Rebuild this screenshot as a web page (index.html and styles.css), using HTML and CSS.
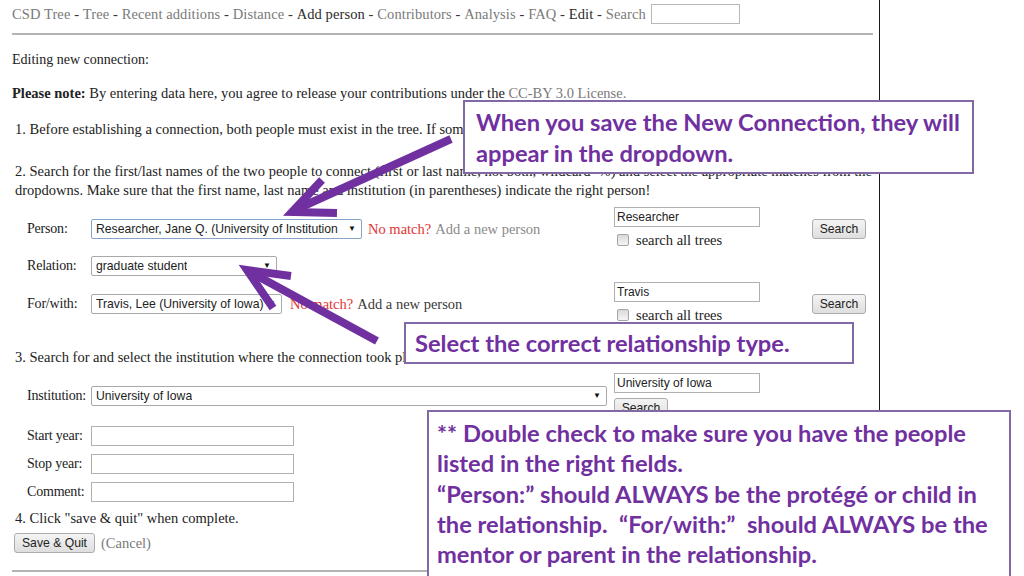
FILE: index.html
```html
<!DOCTYPE html>
<html>
<head>
<meta charset="utf-8">
<title>CSD Tree - Editing new connection</title>
<link rel="stylesheet" href="styles.css">
</head>
<body>
<div class="slide">
  <div class="page">
    <nav class="nav">
      <a class="lnk">CSD Tree</a><span class="sep"> - </span><a class="lnk">Tree</a><span class="sep"> - </span><a class="lnk">Recent additions</a><span class="sep"> - </span><a class="lnk">Distance</a><span class="sep"> - </span><a class="lnk cur">Add person</a><span class="sep"> - </span><a class="lnk">Contributors</a><span class="sep"> - </span><a class="lnk">Analysis</a><span class="sep"> - </span><a class="lnk">FAQ</a><span class="sep"> - </span><a class="lnk cur">Edit</a><span class="sep"> - </span><span class="lnk">Search</span>
      <input class="nav-search" type="text">
    </nav>
    <hr class="rule">
    <p class="t editing">Editing new connection:</p>
    <p class="t note"><b>Please note:</b> By entering data here, you agree to release your contributions under the <a class="lnk">CC-BY 3.0 License.</a></p>
    <p class="t step s1">1. Before establishing a connection, both people must exist in the tree. If someone is missing, add them first.</p>
    <p class="t step s2">2. Search for the first/last names of the two people to connect (first or last name, not both, wildcard=%) and select the appropriate matches from the<br>dropdowns. Make sure that the first name, last name and institution (in parentheses) indicate the right person!</p>

    <div class="grid people">
      <div class="lbl">Person:</div>
      <div class="ctl">
        <div class="sel focus w-person"><span class="val">Researcher, Jane Q. (University of Institution</span><span class="arr">▼</span></div>
        <span class="nomatch">No match?</span> <a class="addp light">Add a new person</a>
      </div>
      <div class="srch">
        <input class="inp" type="text" value="Researcher">
        <label class="chk"><span class="box"></span>search all trees</label>
      </div>
      <div class="btncell"><button class="btn w-search">Search</button></div>

      <div class="lbl">Relation:</div>
      <div class="ctl">
        <div class="sel w-rel"><span class="val">graduate student</span><span class="arr">▼</span></div>
      </div>
      <div></div>
      <div></div>

      <div class="lbl">For/with:</div>
      <div class="ctl">
        <div class="sel w-for"><span class="val">Travis, Lee (University of Iowa)</span><span class="arr">▼</span></div>
        <span class="nomatch nm2">No match?</span> <a class="addp dark">Add a new person</a>
      </div>
      <div class="srch">
        <input class="inp" type="text" value="Travis">
        <label class="chk"><span class="box"></span>search all trees</label>
      </div>
      <div class="btncell"><button class="btn w-search">Search</button></div>
    </div>

    <p class="t step s3">3. Search for and select the institution where the connection took place.</p>

    <div class="grid inst">
      <div class="lbl">Institution:</div>
      <div class="ctl">
        <div class="sel w-inst"><span class="val">University of Iowa</span><span class="arr">▼</span></div>
      </div>
      <div class="srch">
        <input class="inp" type="text" value="University of Iowa">
        <button class="btn w-search under">Search</button>
      </div>
      <div></div>
    </div>

    <div class="grid years">
      <div class="lbl">Start year:</div>
      <div class="ctl"><input class="inp yr" type="text"></div>
      <div class="lbl">Stop year:</div>
      <div class="ctl"><input class="inp yr" type="text"></div>
      <div class="lbl">Comment:</div>
      <div class="ctl"><input class="inp yr" type="text"></div>
    </div>

    <p class="t step s4">4. Click "save &amp; quit" when complete.</p>
    <div class="actions"><button class="btn save">Save &amp; Quit</button><span class="cancel">(<a class="lnk">Cancel</a>)</span></div>
    <hr class="rule bottom">
  </div>

  <svg class="arrows" width="1024" height="576" viewBox="0 0 1024 576">
    <g fill="none" stroke="#7030a0" stroke-width="8" stroke-linejoin="miter" stroke-linecap="butt">
      <line x1="451" y1="139" x2="297" y2="209"/>
      <polyline points="322,180 292,212 337,213"/>
      <line x1="377" y1="341" x2="252" y2="273"/>
      <polyline points="291,276 247,270 273,308"/>
    </g>
  </svg>

  <div class="callout c1">When you save the New Connection, they will<br>appear in the dropdown.</div>
  <div class="callout c2">Select the correct relationship type.</div>
  <div class="callout c3">** Double check to make sure you have the people<br>listed in the right fields.<br>“Person:” should ALWAYS be the protégé or child in<br>the relationship.&nbsp; “For/with:”&nbsp; should ALWAYS be the<br>mentor or parent in the relationship.</div>
</div>
</body>
</html>
```

FILE: styles.css
```css
html, body {
  margin: 0;
  padding: 0;
  background: #ffffff;
}

body {
  width: 1024px;
  height: 576px;
  overflow: hidden;
  font-family: "Liberation Serif", "Times New Roman", serif;
  font-size: 14.5px;
  color: #222222;
}

.slide {
  position: relative;
  width: 1024px;
  height: 576px;
  overflow: hidden;
  background: #ffffff;
}

.page {
  width: 867px;
  height: 576px;
  padding-left: 12px;
  border-right: 1px solid #1a1a1a;
  overflow: hidden;
}

/* navigation */
.nav {
  display: flex;
  align-items: center;
  height: 20px;
  padding-top: 4px;
  white-space: pre;
  line-height: 20px;
  letter-spacing: 0.1px;
}

.lnk {
  color: #7a7a7a;
  text-decoration: none;
}

.lnk.cur {
  color: #2a2a2a;
}

.sep {
  color: #333333;
}

.nav-search {
  margin: 0 0 0 5px;
  width: 89px;
  height: 20px;
  box-sizing: border-box;
  border: 1px solid #b8b8b8;
  padding: 0;
}

.rule {
  margin: 9px 6px 0 0;
  border: 0;
  height: 2px;
  background: #b3b3b3;
}

/* text blocks */
.t {
  margin: 0;
  line-height: 19px;
}

.step {
  padding-left: 3px;
}

.editing { margin-top: 15px; font-size: 14px; }
.note { margin-top: 15px; white-space: nowrap; }
.s1 { margin-top: 17px; white-space: nowrap; }
.s2 { margin-top: 23px; white-space: nowrap; }
.s3 { margin-top: 23px; white-space: nowrap; }
.s4 { margin-top: 7px; }

/* form grids */
.grid {
  display: grid;
  grid-template-columns: 64px 523px 198px auto;
  margin-left: 15px;
  align-items: center;
}

.people {
  margin-top: 7px;
  row-gap: 6px;
}

.inst {
  margin-top: 6px;
}

.years {
  grid-template-columns: 64px auto;
  margin-top: 8px;
  row-gap: 8px;
}

.lbl {
  line-height: 20px;
  font-size: 14px;
  letter-spacing: -0.2px;
  color: #222222;
  white-space: nowrap;
}

.ctl {
  display: flex;
  align-items: center;
  white-space: nowrap;
  line-height: 20px;
}

.sel {
  box-sizing: border-box;
  height: 20px;
  border: 1px solid #a9a9a9;
  border-radius: 2px;
  background: #ffffff;
  display: flex;
  align-items: center;
  justify-content: space-between;
  padding: 0 5px 0 4px;
  font-family: "Liberation Sans", Arial, sans-serif;
  font-size: 12.2px;
  color: #222222;
  overflow: hidden;
}

.val {
  overflow: hidden;
  white-space: nowrap;
}

.sel.focus {
  border-color: #86a3c9;
}

.arr {
  flex: none;
  font-size: 8px;
  color: #111111;
  margin-left: 3px;
}

.w-person { width: 271px; }
.w-rel { width: 186px; }
.w-for { width: 191px; }
.w-inst { width: 516px; }

.nomatch {
  color: #e23434;
  margin-left: 6px;
}

.nm2 {
  margin-left: 8px;
}

.addp {
  margin-left: 4px;
  text-decoration: none;
}

.addp.light { color: #8a8a8a; }
.addp.dark { color: #3a3a3a; }

.srch {
  display: flex;
  flex-direction: column;
  align-items: flex-start;
}

.inp {
  box-sizing: border-box;
  width: 146px;
  height: 20px;
  margin: 0;
  border: 1px solid #b0b0b0;
  padding: 0 2px;
  font-family: "Liberation Sans", Arial, sans-serif;
  font-size: 12px;
  color: #222222;
  background: #ffffff;
}

.inp.yr {
  width: 203px;
}

.chk {
  display: flex;
  align-items: center;
  height: 20px;
  margin-top: 3px;
  color: #222222;
  white-space: nowrap;
}

.box {
  width: 10px;
  height: 10px;
  margin: 0 7px 0 3px;
  border: 1px solid #a5a5a5;
  border-radius: 2px;
  background: linear-gradient(#d9d9d9, #f5f5f5);
}

.btncell {
  display: flex;
  align-items: center;
}

.btn {
  box-sizing: border-box;
  height: 20px;
  margin: 0;
  padding: 0 6px;
  border: 1px solid #acacac;
  border-radius: 3px;
  background: linear-gradient(#f4f4f4, #dedede);
  font-family: "Liberation Sans", Arial, sans-serif;
  font-size: 12.2px;
  color: #222222;
  white-space: nowrap;
}

.w-search { width: 54px; }

.under { margin-top: 5px; }

.actions {
  display: flex;
  align-items: center;
  margin-top: 5px;
  padding-left: 2px;
  white-space: pre;
}

.save {
  width: 81px;
}

.cancel {
  color: #7a7a7a;
  margin-left: 6px;
}

.bottom {
  margin-top: 17px;
}

/* overlay annotations */
.arrows {
  position: absolute;
  left: 0;
  top: 0;
  pointer-events: none;
}

.callout {
  position: absolute;
  box-sizing: border-box;
  background: #ffffff;
  border: 2px solid #8069a4;
  font-family: Lato, "Open Sans", sans-serif;
  font-weight: 700;
  font-size: 23.7px;
  color: #7030a0;
  white-space: nowrap;
}

.c1 {
  left: 463px;
  top: 100px;
  width: 511px;
  height: 74px;
  padding: 5px 0 0 11px;
  line-height: 31px;
}

.c2 {
  left: 404px;
  top: 322px;
  width: 450px;
  height: 42px;
  padding: 4px 0 0 9px;
  line-height: 31px;
}

.c3 {
  left: 427px;
  top: 410px;
  width: 584px;
  height: 180px;
  padding: 6px 0 0 8px;
  line-height: 30.3px;
}
```
